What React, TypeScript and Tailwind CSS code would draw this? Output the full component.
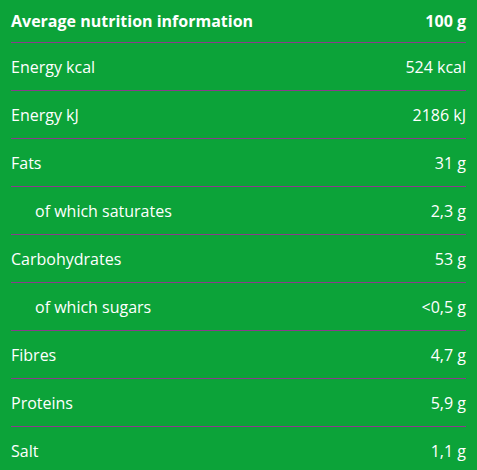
import React from 'react'

const rows = [
  { label: 'Energy kcal', value: '524 kcal' },
  { label: 'Energy kJ', value: '2186 kJ' },
  { label: 'Fats', value: '31 g' },
  { label: 'of which saturates', value: '2,3 g', sub: true },
  { label: 'Carbohydrates', value: '53 g' },
  { label: 'of which sugars', value: '<0,5 g', sub: true },
  { label: 'Fibres', value: '4,7 g' },
  { label: 'Proteins', value: '5,9 g' },
  { label: 'Salt', value: '1,1 g' },
]

export default function App() {
  return (
    <div
      className="w-[477px] h-[470px] bg-[#0ca339] px-[11px] text-white text-[16px] overflow-hidden"
      style={{ fontFamily: '"Open Sans", "Noto Sans", sans-serif' }}
    >
      <div className="flex h-[43px] items-center justify-between border-b border-[#8a3d8c] font-bold">
        <span>Average nutrition information</span>
        <span>100 g</span>
      </div>
      {rows.map((row, i) => (
        <div
          key={i}
          className={`flex h-[48px] items-center justify-between ${
            i < rows.length - 1 ? 'border-b border-[#8a3d8c]' : ''
          }`}
        >
          <span className={row.sub ? 'pl-6' : ''}>{row.label}</span>
          <span>{row.value}</span>
        </div>
      ))}
    </div>
  )
}
